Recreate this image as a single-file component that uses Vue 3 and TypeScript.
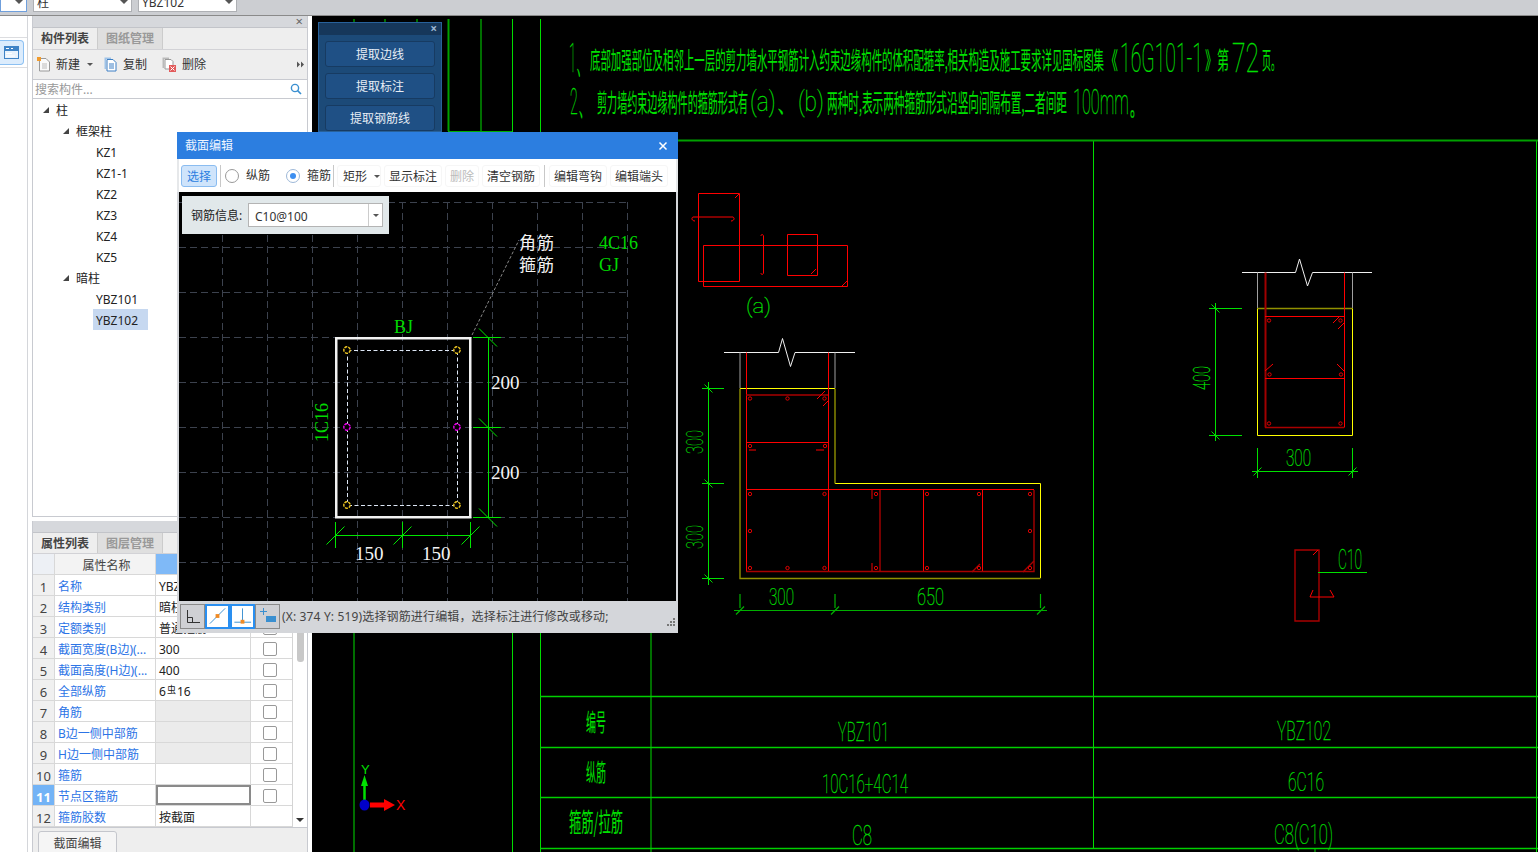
<script setup lang="ts">
import { onMounted, ref } from 'vue'

interface TreeNode {
  label: string
  level: number
  open?: boolean
  selected?: boolean
}
interface PropRow {
  no: number
  name: string
  value?: string
  rebar?: boolean
  gray?: boolean
  active?: boolean
  noCheck?: boolean
}
interface CadText {
  t: string
  x: number
  y: number
  w: number
  s: number
  c: string
  r?: boolean
}
interface Stroke {
  d: string
  c: string
}

const tree: TreeNode[] = [
  { label: '柱', level: 0, open: true },
  { label: '框架柱', level: 1, open: true },
  { label: 'KZ1', level: 2 },
  { label: 'KZ1-1', level: 2 },
  { label: 'KZ2', level: 2 },
  { label: 'KZ3', level: 2 },
  { label: 'KZ4', level: 2 },
  { label: 'KZ5', level: 2 },
  { label: '暗柱', level: 1, open: true },
  { label: 'YBZ101', level: 2 },
  { label: 'YBZ102', level: 2, selected: true },
]

const props: PropRow[] = [
  { no: 1, name: '名称', value: 'YBZ102' },
  { no: 2, name: '结构类别', value: '暗柱' },
  { no: 3, name: '定额类别', value: '普通箍筋' },
  { no: 4, name: '截面宽度(B边)(...', value: '300' },
  { no: 5, name: '截面高度(H边)(...', value: '400' },
  { no: 6, name: '全部纵筋', value: '16', rebar: true },
  { no: 7, name: '角筋', gray: true },
  { no: 8, name: 'B边一侧中部筋', gray: true },
  { no: 9, name: 'H边一侧中部筋', gray: true },
  { no: 10, name: '箍筋' },
  { no: 11, name: '节点区箍筋', active: true },
  { no: 12, name: '箍筋胶数', value: '按截面', noCheck: true },
]

const selected = ref('stirrup')

// slanted tick on a dimension line
const tick = (x: number, y: number, r: number, back = false): string =>
  back ? `M${x - r} ${y - r}L${x + r} ${y + r}` : `M${x - r} ${y + r}L${x + r} ${y - r}`

const strokes: Stroke[] = [
  // frame lines
  { d: 'M448.5 19V131', c: 'frame' },
  { d: 'M481 19V131M512.5 19V852M354 19V23M385 19V23M417 19V23M354 632V852M651 140V852M1093.5 140V848M1315 848V852M1536.5 140V852', c: 'bright' },
  { d: 'M540.5 19V852', c: 'bright' },
  { d: 'M448 131.5H512', c: 'mid' },
  { d: 'M540 140.5H1538', c: 'frame' },
  { d: 'M540 696.5H1538M540 747.5H1538M540 797.5H1538M540 848.5H1538', c: 'table' },

  // detail (a)
  { d: 'M698.5 193.5H739.5V281.5H698.5Z', c: 'red' },
  { d: 'M703.5 245.5H847.5V286.5H703.5Z', c: 'red' },
  { d: 'M787.5 234.5H817.5V275.5H787.5Z', c: 'red' },
  { d: 'M693 217H733M693 217C691 218 692 221 695 221M733 217C735 218 734 221 731 221', c: 'red' },
  { d: 'M763.5 236V273M763.5 236C763 234 761 234 761 236M763.5 273C763 275 761 275 761 273', c: 'red' },
  { d: 'M735 198L739 194M811 274L816 269M842 286L847 281', c: 'red' },

  // YBZ101
  { d: 'M724 352.5H778.5L782.5 338.5L790.5 366.5L795 352.5H855', c: 'white' },
  { d: 'M740 352.5V388M835 352.5V388', c: 'gray' },
  { d: 'M740 388.5H835M835 483.5H1040.5V578', c: 'yellow' },
  { d: 'M740 388.5V578.5H1040.5M835 388.5V483.5', c: 'olive' },
  { d: 'M746.5 352.5V572M828.5 352.5V572M746 442.5H828M746 489.5H1034M923.5 490V572M982.5 490V572', c: 'red' },
  { d: 'M746 395H828M746 571.5H1034V490M880 490V572', c: 'dred' },
  { d: 'M817 399L825 391M823 406L829 400M749 450H756M816 450H824', c: 'red' },
  { d: 'M872 499V490M872 572V563M972 572L980 564M1023 572L1034 561', c: 'dred' },
  { d: tick(708.5, 388.5, 4, true) + tick(708.5, 483.5, 4, true) + tick(708.5, 578.5, 4, true) + 'M702 388.5H724M702 483.5H724M702 578.5H724M708.5 382V585', c: 'dim' },
  { d: 'M734 610.5H1047M740 594V608M835 594V608M1040.5 594V608' + tick(740, 610.5, 4) + tick(835, 610.5, 4) + tick(1041, 610.5, 4), c: 'ddim' },

  // YBZ102
  { d: 'M1242 272.5H1295.5L1299.5 259L1307.5 286L1312.5 272.5H1372', c: 'white' },
  { d: 'M1257.5 272.5V308M1352.5 272.5V308', c: 'gray' },
  { d: 'M1257.5 308.5H1352.5', c: 'olive' },
  { d: 'M1257.5 308.5V435.5H1352.5V308.5', c: 'yellow' },
  { d: 'M1265.5 272.5V427.5', c: 'dredw' },
  { d: 'M1344.5 272.5V427.5M1265 316.5H1344M1265 378.5H1344', c: 'red' },
  { d: 'M1265 427.5H1344', c: 'dred' },
  { d: 'M1333 323L1339 317M1338 329L1344 323M1265 371L1273 364M1344 371L1337 364', c: 'red' },
  { d: tick(1215.5, 308.5, 4, true) + tick(1215.5, 435.5, 4, true) + 'M1209 308.5H1242M1209 435.5H1242M1215.5 303V441', c: 'dim' },
  { d: 'M1252 471.5H1358M1257.5 448V478M1352.5 448V478' + tick(1257.5, 471.5, 4) + tick(1352.5, 471.5, 4), c: 'dim' },

  // C10 tie
  { d: 'M1295 550H1319V621H1295Z', c: 'dred' },
  { d: 'M1313 555L1318 550M1310 597H1334M1310 597L1313 590M1334 597L1330 590', c: 'red' },
  { d: 'M1318 572.5H1367', c: 'dim' },

  // axis
  { d: 'M364.5 783V802', c: 'axisg' },
]

const smallBars: number[][] = [
  [750, 398.5], [787.5, 398.5], [824.5, 398.5],
  [750, 446], [825, 446],
  [750, 494], [824.5, 494], [876, 494], [927, 494], [979, 494], [1030, 494],
  [750, 531], [1030, 531],
  [750, 568], [787.5, 568], [824.5, 568], [876, 568], [927, 568], [979, 568], [1030, 568],
  [1269, 320.5], [1340.5, 320.5], [1269.5, 374.5], [1341, 374.5], [1269, 423.5], [1340.5, 423.5],
]

const cadTexts: CadText[] = [
  { t: '1、', x: 569, y: 72, w: 20, s: 40, c: 'num' },
  { t: '底部加强部位及相邻上一层的剪力墙水平钢筋计入约束边缘构件的体积配箍率,相关构造及施工要求详见国标图集', x: 590, y: 69, w: 514, s: 24, c: 'cjk' },
  { t: '《', x: 1105, y: 69, w: 13, s: 24, c: 'cjk' },
  { t: '16G101-1', x: 1120, y: 72, w: 83, s: 40, c: 'num' },
  { t: '》第', x: 1205, y: 69, w: 24, s: 24, c: 'cjk' },
  { t: '72', x: 1232, y: 72, w: 27, s: 40, c: 'num' },
  { t: '页。', x: 1262, y: 69, w: 18, s: 24, c: 'cjk' },
  { t: '2、', x: 570, y: 114, w: 22, s: 36, c: 'num' },
  { t: '剪力墙约束边缘构件的箍筋形式有', x: 597, y: 112, w: 151, s: 25, c: 'cjk' },
  { t: '(a)、(b)', x: 750, y: 111, w: 74, s: 28, c: 'num' },
  { t: '两种时,表示两种箍筋形式沿竖向间隔布置,二者间距', x: 827, y: 112, w: 240, s: 25, c: 'cjk' },
  { t: '100mm。', x: 1073, y: 114, w: 72, s: 36, c: 'num' },

  { t: '(a)', x: 746, y: 313, w: 25, s: 20, c: 'num' },
  { t: '300', x: 703, y: 454, w: 24, s: 23, c: 'dnum', r: true },
  { t: '300', x: 703, y: 549, w: 24, s: 23, c: 'dnum', r: true },
  { t: '300', x: 769, y: 605, w: 25, s: 23, c: 'num' },
  { t: '650', x: 917, y: 605, w: 27, s: 23, c: 'num' },
  { t: '400', x: 1210, y: 390, w: 24, s: 23, c: 'num', r: true },
  { t: '300', x: 1286, y: 466, w: 25, s: 23, c: 'num' },
  { t: 'C10', x: 1338, y: 569, w: 24, s: 27, c: 'num' },

  { t: '编号', x: 586, y: 731, w: 20, s: 24, c: 'cjk' },
  { t: '纵筋', x: 586, y: 781, w: 20, s: 24, c: 'cjk' },
  { t: '箍筋/拉筋', x: 569, y: 832, w: 54, s: 26, c: 'cjk' },
  { t: 'YBZ101', x: 838, y: 741, w: 51, s: 26, c: 'num' },
  { t: 'YBZ102', x: 1277, y: 740, w: 54, s: 26, c: 'num' },
  { t: '10C16+4C14', x: 822, y: 793, w: 86, s: 26, c: 'num' },
  { t: '6C16', x: 1288, y: 791, w: 36, s: 26, c: 'num' },
  { t: 'C8', x: 852, y: 845, w: 20, s: 27, c: 'num' },
  { t: 'C8(C10)', x: 1274, y: 844, w: 59, s: 27, c: 'num' },
]

// the drawing's text is squeezed to the width it has on the sheet
const textEls = ref<SVGTextElement[]>([])
const squeeze = ref<number[]>(cadTexts.map((t) => t.w / (t.t.length * t.s * 0.6)))

onMounted(() => {
  squeeze.value = cadTexts.map((t, i) => t.w / textEls.value[i].getComputedTextLength())
})

const textTransform = (t: CadText, i: number): string =>
  `translate(${t.x} ${t.y})${t.r ? ' rotate(-90)' : ''} scale(${squeeze.value[i]} 1)`

const gridX = [222.5, 267.5, 312.5, 357.5, 402.5, 447.5, 492.5, 537.5, 582.5, 627.5]
const gridY = [202.5, 247.5, 292.5, 337.5, 382.5, 427.5, 472.5, 517.5, 562.5]

const cornerBars: number[][] = [[347, 350], [457, 350], [347, 505], [457, 505]]
const sideBars: number[][] = [[347, 427], [457, 427]]

const dimPath =
  'M488.5 337V518M473 337.5H501M473 427.5H501M473 517.5H501' +
  tick(488, 337.5, 9, true) + tick(488, 427.5, 9, true) + tick(488, 517.5, 9, true) +
  'M335 535.5H471M335.5 522V548M402.5 522V548M470.5 522V548' +
  tick(335.5, 535.5, 9) + tick(402.5, 535.5, 9) + tick(470.5, 535.5, 9)
</script>

<template>
  <div class="app">
    <div class="topbar">
      <div class="combo first"><i class="caret"></i></div>
      <div class="combo"><span>柱</span><i class="caret"></i></div>
      <div class="combo"><span>YBZ102</span><i class="caret"></i></div>
    </div>

    <div class="main">
      <div class="strip">
        <div class="strip-row">
          <div class="strip-icon">
            <svg width="15" height="13" viewBox="0 0 15 13">
              <rect x="0.5" y="0.5" width="14" height="12" fill="#e8f2fc" stroke="#3f83c6" />
              <path d="M0 0H15V5H0Z" fill="#3f83c6" />
              <path d="M2 2.5H5M7 2.5H9M2 7.5H8M2 10H11" stroke="#fff" />
            </svg>
          </div>
        </div>
      </div>

      <div class="side">
        <section class="panel list-panel">
          <div class="grip"><span class="grip-x">×</span></div>
          <div class="tabs">
            <div class="tab on">构件列表</div>
            <div class="tab">图纸管理</div>
          </div>
          <div class="tools">
            <svg class="tool-icon" width="14" height="15" viewBox="0 0 14 15">
              <path d="M2.5 1.5H9L12.5 5V14H2.5Z" fill="#fafafa" stroke="#999" />
              <path d="M5 7H10M5 9H10M5 11H10" stroke="#bbb" />
              <rect x="0" y="0" width="4" height="4" fill="#f09a2c" />
            </svg>
            <span class="tool-text">新建</span>
            <i class="mini-caret"></i>
            <svg class="tool-icon copy" width="13" height="15" viewBox="0 0 13 15">
              <path d="M0.5 0.5H7V2H2V12H0.5Z" fill="#9fc3e8" />
              <path d="M3 2.5H9L12 5.5V14H3Z" fill="#fff" stroke="#3c7fc4" />
              <path d="M5 7H10M5 9H10M5 11H10" stroke="#3c7fc4" />
            </svg>
            <span class="tool-text wide">复制</span>
            <svg class="tool-icon del" width="15" height="15" viewBox="0 0 15 15">
              <path d="M0.5 0.5H7V2H2V11H0.5Z" fill="#bbb" />
              <path d="M3 2.5H9L11 4.5V12H3Z" fill="#fff" stroke="#999" />
              <rect x="7" y="8" width="7" height="7" fill="#e25b5b" />
              <path d="M8.5 9.5L12.5 13.5M12.5 9.5L8.5 13.5" stroke="#fff" />
            </svg>
            <span class="tool-text">删除</span>
            <svg class="more" width="7" height="7" viewBox="0 0 7 7">
              <path d="M0 0.5L3 3.5L0 6.5ZM4 0.5L7 3.5L4 6.5Z" fill="#555" />
            </svg>
          </div>
          <div class="search">
            <span class="search-hint">搜索构件...</span>
            <svg width="12" height="12" viewBox="0 0 12 12">
              <circle cx="5" cy="5" r="3.6" fill="none" stroke="#3a8fd0" stroke-width="1.4" />
              <path d="M7.6 7.6L11 11" stroke="#3a8fd0" stroke-width="1.6" />
            </svg>
          </div>
          <div class="tree">
            <div v-for="node in tree" :key="node.label" class="node" :class="'lvl' + node.level">
              <i v-if="node.open" class="arrow"></i>
              <span class="node-label" :class="{ sel: node.selected }">{{ node.label }}</span>
            </div>
          </div>
        </section>

        <section class="panel prop-panel">
          <div class="grip"></div>
          <div class="tabs">
            <div class="tab on">属性列表</div>
            <div class="tab">图层管理</div>
          </div>
          <div class="prop-body">
            <div class="prop-table">
              <div class="row head">
                <div class="c-no"></div>
                <div class="c-name">属性名称</div>
                <div class="c-val"></div>
                <div class="c-chk"></div>
              </div>
              <div v-for="p in props" :key="p.no" class="row">
                <div class="c-no" :class="{ active: p.active }">{{ p.no }}</div>
                <div class="c-name link">{{ p.name }}</div>
                <div class="c-val" :class="{ gray: p.gray, editing: p.active }">
                  <template v-if="p.rebar">6<span class="rebar">虫</span></template>{{ p.value }}
                </div>
                <div class="c-chk"><i v-if="!p.noCheck" class="check"></i></div>
              </div>
            </div>
            <div class="scroll">
              <div class="thumb"></div>
              <i class="scroll-down"></i>
            </div>
          </div>
          <div class="foot">
            <div class="foot-tab">截面编辑</div>
          </div>
        </section>
      </div>

      <div class="canvas">
        <svg class="cad" viewBox="312 16 1226 836" width="1226" height="836">
          <path v-for="(s, i) in strokes" :key="i" :d="s.d" :class="s.c" fill="none" />
          <circle v-for="(b, i) in smallBars" :key="'b' + i" :cx="b[0]" :cy="b[1]" r="1.7" class="bar" />
          <text
            v-for="(t, i) in cadTexts"
            :key="'t' + i"
            ref="textEls"
            :class="t.c"
            :font-size="t.s"
            :transform="textTransform(t, i)"
          >{{ t.t }}</text>

          <path d="M364.5 775L361 786H368Z" fill="#00e000" />
          <path d="M370 802.5H384V799L395 805L384 811V807.5H370Z" fill="#f00" />
          <ellipse cx="364.5" cy="805" rx="5" ry="5.5" fill="#0000c8" />
          <text x="361" y="774" class="axis-y">Y</text>
          <text x="396" y="810" class="axis-x">X</text>
        </svg>

        <div class="extract">
          <div class="extract-head"><span>×</span></div>
          <button class="extract-btn">提取边线</button>
          <button class="extract-btn">提取标注</button>
          <button class="extract-btn">提取钢筋线</button>
        </div>
      </div>
    </div>

    <div class="dialog">
      <div class="dlg-title">
        <span>截面编辑</span>
        <svg width="10" height="10" viewBox="0 0 10 10">
          <path d="M1.5 1.5L8.5 8.5M8.5 1.5L1.5 8.5" stroke="#fff" stroke-width="1.5" />
        </svg>
      </div>

      <div class="dlg-tools">
        <button class="pick">选择</button>
        <i class="sep s1"></i>
        <label class="radio r1" @click="selected = 'long'">
          <i class="dot" :class="{ on: selected === 'long' }"></i>纵筋
        </label>
        <label class="radio r2" @click="selected = 'stirrup'">
          <i class="dot" :class="{ on: selected === 'stirrup' }"></i>箍筋
        </label>
        <i class="sep s2"></i>
        <span class="tbtn shape">矩形<i class="mini-caret"></i></span>
        <span class="tbtn">显示标注</span>
        <span class="tbtn off">删除</span>
        <span class="tbtn">清空钢筋</span>
        <i class="sep s3"></i>
        <span class="tbtn">编辑弯钩</span>
        <span class="tbtn">编辑端头</span>
      </div>

      <div class="dlg-canvas">
        <svg class="sect" viewBox="179 192 497 409" width="497" height="409">
          <path v-for="x in gridX" :key="'x' + x" :d="`M${x} 202V601`" class="grid" />
          <path v-for="y in gridY" :key="'y' + y" :d="`M179 ${y}H628`" class="grid" />
          <path d="M472 335L519 240" class="leader" />
          <rect x="336.25" y="338.25" width="134" height="179" class="outline" />
          <rect x="347.5" y="350.5" width="110" height="155" class="hoop" />
          <path :d="dimPath" class="sect-dim" />
          <circle v-for="b in cornerBars" :key="'c' + b[0] + b[1]" :cx="b[0]" :cy="b[1]" r="3.2" class="corner" />
          <circle v-for="b in sideBars" :key="'s' + b[0] + b[1]" :cx="b[0]" :cy="b[1]" r="3.2" class="side-bar" />
          <text x="394" y="333" class="lab-g">BJ</text>
          <text x="599" y="249" class="lab-g">4C16</text>
          <text x="599" y="271" class="lab-g">GJ</text>
          <text x="328" y="442" class="lab-g" transform="rotate(-90 328 442)">1C16</text>
          <text x="519" y="249" class="lab-cn">角筋</text>
          <text x="519" y="271" class="lab-cn">箍筋</text>
          <text x="491" y="389" class="lab-w">200</text>
          <text x="491" y="479" class="lab-w">200</text>
          <text x="355" y="560" class="lab-w">150</text>
          <text x="422" y="560" class="lab-w">150</text>
        </svg>

        <div class="info">
          <span class="info-label">钢筋信息:</span>
          <div class="info-input">
            <span class="info-val">C10@100</span>
            <span class="info-drop"><i class="mini-caret"></i></span>
          </div>
        </div>
      </div>

      <div class="dlg-status">
        <div class="snap">
          <svg width="22" height="22" viewBox="0 0 22 22">
            <path d="M5.5 5V17.5H18M5.5 12.5H10.5V17.5" fill="none" stroke="#333" />
          </svg>
        </div>
        <div class="snap on">
          <svg width="22" height="22" viewBox="0 0 22 22">
            <path d="M3 19L19 3" stroke="#3a8fd0" />
            <rect x="9" y="9" width="4" height="4" fill="#f08a24" />
          </svg>
        </div>
        <div class="snap on">
          <svg width="22" height="22" viewBox="0 0 22 22">
            <path d="M2.5 17.5H20M11 3V17" stroke="#3a8fd0" />
            <rect x="9" y="15" width="4" height="4" fill="#f08a24" />
          </svg>
        </div>
        <div class="snap">
          <svg width="22" height="22" viewBox="0 0 22 22">
            <path d="M3 6.5H10M6.5 3V10" stroke="#3a8fd0" />
            <rect x="9" y="11" width="10" height="6" fill="#3a8fd0" />
          </svg>
        </div>
        <span class="status-text">(X: 374 Y: 519)选择钢筋进行编辑，选择标注进行修改或移动;</span>
        <svg class="resize" width="10" height="10" viewBox="0 0 10 10">
          <path d="M7 1h2v2H7zM4 4h2v2H4zM7 4h2v2H7zM1 7h2v2H1zM4 7h2v2H4zM7 7h2v2H7z" fill="#777" />
        </svg>
      </div>
    </div>
  </div>
</template>

<style>
html,
body {
  margin: 0;
  overflow: hidden;
  background: #fff;
}
</style>

<style scoped>
.app {
  position: relative;
  width: 1538px;
  height: 852px;
  overflow: hidden;
  display: flex;
  flex-direction: column;
  background: #fff;
  color: #222;
  font: 12px/16px "Noto Sans", "Noto Sans CJK SC", sans-serif;
}

i {
  display: block;
  font-style: normal;
}

.topbar {
  flex: none;
  height: 15px;
  display: flex;
  gap: 6px;
  background: #ccced2;
  border-bottom: 1px solid #8a8a8a;
}

.combo {
  position: relative;
  box-sizing: border-box;
  width: 99px;
  height: 12px;
  padding-left: 3px;
  background: #fff;
  border: 1px solid #aeb0b4;
  border-top: 0;
  line-height: 6px;
  color: #333;
}

.combo.first {
  width: 27px;
  border-color: #6f9fdc;
}

.caret {
  position: absolute;
  right: 3px;
  top: 0;
  border: 4px solid transparent;
  border-top: 4px solid #555;
}

.main {
  flex: 1;
  display: flex;
  min-height: 0;
}

.strip {
  flex: none;
  box-sizing: border-box;
  width: 28px;
  margin-right: 4px;
  border-right: 1px solid #d4d6da;
  padding-top: 21px;
}

.strip-row {
  padding: 2px 0;
  border: 1px solid #dcdde0;
  border-width: 1px 0;
}

.strip-icon {
  width: 23px;
  height: 23px;
  display: flex;
  align-items: center;
  justify-content: center;
  background: #dcecfc;
  border: 1px solid #8cc0f2;
  border-left: 0;
  border-radius: 0 4px 4px 0;
}

.side {
  flex: none;
  width: 276px;
  margin-right: 4px;
  display: flex;
  flex-direction: column;
  gap: 4px;
}

.panel {
  box-sizing: border-box;
  display: flex;
  flex-direction: column;
  border: 1px solid #c8cad0;
  border-top: 0;
}

.list-panel {
  flex: none;
  height: 501px;
}

.prop-panel {
  flex: 1;
  min-height: 0;
  border-bottom: 0;
}

.grip {
  flex: none;
  position: relative;
  height: 11px;
  background: #d6d8dc;
  border-bottom: 1px solid #c2c4c9;
}

.grip-x {
  position: absolute;
  right: 4px;
  top: -3px;
  font-size: 13px;
  color: #666;
}

.tabs {
  flex: none;
  box-sizing: border-box;
  height: 22px;
  display: flex;
  background: #eee;
  border-bottom: 1px solid #d2d2d6;
}

.prop-panel .tabs {
  height: 21px;
}

.tab {
  box-sizing: border-box;
  width: 65px;
  line-height: 21px;
  text-align: center;
  background: #dfdfdf;
  color: #999;
  font-weight: 700;
  border-right: 1px solid #ccc;
}

.tab.on {
  background: #eee;
  color: #444;
}

.tools {
  flex: none;
  height: 29px;
  display: flex;
  align-items: center;
  padding-left: 4px;
  background: #eee;
  border-bottom: 1px solid #c8cad0;
}

.tool-text {
  margin-left: 5px;
  color: #333;
}

.tool-text.wide {
  margin-left: 6px;
}

.mini-caret {
  border: 3px solid transparent;
  border-top: 3px solid #555;
  margin-top: 3px;
}

.tools .mini-caret {
  margin-left: 7px;
}

.copy {
  margin-left: 11px;
}

.del {
  margin-left: 15px;
}

.more {
  margin-left: auto;
  margin-right: 3px;
}

.search {
  flex: none;
  box-sizing: border-box;
  height: 19px;
  display: flex;
  align-items: center;
  justify-content: space-between;
  padding: 0 5px 0 2px;
  background: #fff;
  border-bottom: 1px solid #c8cad0;
}

.search-hint {
  padding-top: 2px;
  color: #999;
}

.tree {
  flex: 1;
  background: #fff;
}

.node {
  position: relative;
  height: 21px;
  display: flex;
  align-items: center;
  color: #222;
}

.lvl0 {
  padding-left: 20px;
}

.lvl1 {
  padding-left: 40px;
}

.lvl2 {
  padding-left: 60px;
}

.arrow {
  position: absolute;
  margin-left: -10px;
  width: 0;
  height: 0;
  border-left: 6px solid transparent;
  border-bottom: 6px solid #444;
}

.node-label {
  height: 21px;
  padding: 0 3px;
  line-height: 23px;
}

.node-label.sel {
  background: #c6d8f0;
  padding-right: 10px;
}

.prop-body {
  flex: none;
  height: 273px;
  display: flex;
  background: #fff;
}

.prop-table {
  width: 259px;
  border-right: 1px solid #d4d4d4;
}

.row {
  display: grid;
  grid-template-columns: 22px 101px 95px 41px;
  height: 21px;
  box-sizing: border-box;
  border-bottom: 1px solid #d8d8d8;
}

.row > div {
  box-sizing: border-box;
  padding-top: 2px;
  line-height: 20px;
  border-right: 1px solid #d8d8d8;
  white-space: nowrap;
  overflow: hidden;
}

.c-no {
  background: #f0f0f0;
  text-align: center;
  color: #444;
  font-size: 13px;
}

.c-no.active {
  background: #73b3f6;
  color: #fff;
  font-weight: 700;
}

.c-name {
  padding-left: 3px;
}

.link {
  color: #2c74e6;
}

.c-val {
  padding-left: 3px;
  color: #222;
}

.c-val.gray {
  background: #ebebeb;
}

.row > .c-val.editing {
  padding-top: 0;
  border: 2px solid #8a8a8a;
}

.rebar {
  display: inline-block;
  font-size: 9px;
  line-height: 10px;
  vertical-align: 3px;
  margin: 0 1px;
}

.c-chk {
  display: flex;
  align-items: center;
  justify-content: center;
  padding-right: 4px;
}

.row > .c-chk {
  border-right: 0;
}

.check {
  box-sizing: border-box;
  width: 14px;
  height: 14px;
  border: 1px solid #999;
  border-radius: 2px;
  background: #fff;
}

.head .c-no {
  background: #edf0f5;
}

.head .c-name {
  background: #f3f3f3;
  text-align: center;
  color: #444;
}

.head .c-val {
  background: #7fb9f7;
}

.head .c-chk {
  background: #f3f3f3;
}

.scroll {
  flex: 1;
  display: flex;
  flex-direction: column;
  align-items: center;
  background: #fff;
}

.thumb {
  width: 7px;
  height: 62px;
  margin-top: 46px;
  border-radius: 3px;
  background: #c8c8c8;
}

.scroll-down {
  margin-top: auto;
  margin-bottom: 1px;
  border: 4px solid transparent;
  border-top: 4px solid #333;
}

.foot {
  flex: 1;
  min-height: 0;
  overflow: hidden;
  padding: 3px 0 0 5px;
  background: #eee;
  border-top: 1px solid #c8cad0;
}

.foot-tab {
  box-sizing: border-box;
  width: 79px;
  height: 24px;
  line-height: 23px;
  text-align: center;
  background: #f5f5f5;
  border: 1px solid #c4c6cc;
  border-radius: 3px 3px 0 0;
  color: #444;
}

.canvas {
  position: relative;
  flex: 1;
  background: #000;
}

.cad {
  display: block;
}

.frame {
  stroke: #00a000;
  stroke-width: 2;
}

.bright {
  stroke: #00dc00;
  stroke-width: 1;
}

.mid {
  stroke: #00b000;
  stroke-width: 1;
}

.table {
  stroke: #00d000;
  stroke-width: 1.6;
}

.red {
  stroke: #f00;
}

.dred {
  stroke: #a80000;
  stroke-width: 1.4;
}

.dredw {
  stroke: #a00000;
  stroke-width: 2;
}

.white {
  stroke: #f0f0f0;
}

.gray {
  stroke: #a0a0a0;
}

.yellow {
  stroke: #ff0;
}

.olive {
  stroke: #909000;
  stroke-width: 1.4;
}

.dim {
  stroke: #00e000;
}

.ddim {
  stroke: #00b000;
  stroke-width: 1.2;
}

.axisg {
  stroke: #00e000;
  stroke-width: 2.5;
}

.bar {
  fill: none;
  stroke: #e00000;
}

.cjk {
  fill: #00e000;
  font-family: "Noto Sans CJK SC", sans-serif;
  font-weight: 400;
}

.num {
  fill: #00e000;
  stroke: #00e000;
  stroke-width: 0.25;
  font-family: Roboto, "Liberation Sans", sans-serif;
  font-weight: 100;
}

.dnum {
  fill: #00c000;
  stroke: #00c000;
  stroke-width: 0.25;
  font-family: Roboto, "Liberation Sans", sans-serif;
  font-weight: 100;
}

.axis-y {
  fill: #00e000;
  font: 13px "Liberation Sans", sans-serif;
}

.axis-x {
  fill: #f00;
  font: 14px "Liberation Sans", sans-serif;
}

.extract {
  position: absolute;
  left: 6px;
  top: 6px;
  box-sizing: border-box;
  width: 124px;
  height: 110px;
  background: #1c4a78;
  border: 1px solid #28619a;
}

.extract-head {
  height: 12px;
  background: #16375a;
  text-align: right;
  padding-right: 4px;
  line-height: 12px;
  font-size: 12px;
  font-weight: 700;
  color: #9bb6d2;
}

.extract-btn {
  display: block;
  box-sizing: border-box;
  width: 110px;
  height: 26px;
  margin: 6px 0 0 6px;
  padding: 2px 0 0;
  background: #1f5085;
  border: 1px solid #173b62;
  border-radius: 3px;
  color: #e8eef5;
  font: inherit;
}

.dialog {
  position: absolute;
  left: 177px;
  top: 132px;
  width: 501px;
  height: 501px;
  display: flex;
  flex-direction: column;
  background: #d4d6da;
}

.dlg-title {
  flex: none;
  height: 27px;
  display: flex;
  align-items: center;
  justify-content: space-between;
  padding: 0 10px 0 8px;
  background: #2c7ee0;
  color: #eef5ff;
}

.dlg-tools {
  flex: none;
  height: 33px;
  display: flex;
  align-items: center;
  padding-left: 4px;
  background: #fff;
  color: #333;
  white-space: nowrap;
  border: 1px solid #e6e8ea;
  border-width: 0 2px 0 2px;
  box-sizing: border-box;
}

.dlg-tools > * {
  flex: none;
}

.pick {
  box-sizing: border-box;
  width: 36px;
  height: 22px;
  margin-left: -2px;
  padding: 2px 0 0;
  background: #cfe4fb;
  border: 1px solid #8abcf0;
  border-radius: 3px;
  color: #2c7ee0;
  font: inherit;
}

.sep {
  width: 1px;
  height: 22px;
  background: #c8c8c8;
}

.s1 {
  margin-left: 3px;
}

.s2 {
  margin-left: 2px;
}

.s3 {
  margin-left: 4px;
}

.radio {
  display: flex;
  align-items: center;
  gap: 7px;
}

.r1 {
  margin-left: 4px;
}

.r2 {
  margin-left: 16px;
}

.dot {
  position: relative;
  box-sizing: border-box;
  width: 14px;
  height: 14px;
  border: 1px solid #999;
  border-radius: 50%;
}

.dot.on {
  border-color: #9db8d8;
}

.dot.on::after {
  content: "";
  position: absolute;
  left: 3px;
  top: 3px;
  width: 6px;
  height: 6px;
  border-radius: 50%;
  background: #3c8ef0;
}

.tbtn {
  display: flex;
  align-items: center;
  box-sizing: border-box;
  height: 22px;
  padding: 2px 4px 0;
  margin-left: 3px;
  border: 1px solid #f6f6f6;
  border-radius: 3px;
}

.tbtn.off {
  color: #bbb;
}

.shape {
  padding: 2px 0 0 5px;
}

.shape .mini-caret {
  margin-left: 7px;
}

.s3 + .tbtn {
  margin-left: 4px;
}

.dlg-canvas {
  position: relative;
  flex: none;
  height: 409px;
  margin: 0 2px;
  background: #000;
}

.sect {
  display: block;
}

.grid {
  stroke: #3c424e;
  stroke-dasharray: 7 4;
  fill: none;
}

.leader {
  stroke: #888;
  stroke-dasharray: 3 2;
  fill: none;
}

.outline {
  fill: none;
  stroke: #f2f2f2;
  stroke-width: 2.5;
}

.hoop {
  fill: none;
  stroke: #dde6f5;
  stroke-dasharray: 4 2.5;
}

.sect-dim {
  fill: none;
  stroke: #00e600;
}

.corner {
  fill: #000;
  stroke: #f0c820;
  stroke-width: 1.4;
  stroke-dasharray: 3 1;
}

.side-bar {
  fill: #000;
  stroke: #f000f0;
  stroke-width: 1.4;
  stroke-dasharray: 3 1;
}

.lab-g {
  fill: #00d800;
  font: 18px "Liberation Serif", serif;
}

.lab-cn {
  fill: #f4f4f4;
  font: 17px "Noto Sans CJK SC", sans-serif;
  letter-spacing: 1px;
}

.lab-w {
  fill: #f4f4f4;
  font: 19px "Liberation Serif", serif;
}

.info {
  position: absolute;
  left: 3px;
  top: 4px;
  box-sizing: border-box;
  width: 207px;
  height: 38px;
  display: flex;
  align-items: center;
  padding-left: 9px;
  background: #e1e8ea;
}

.info-label {
  width: 57px;
  flex: none;
  padding-top: 1px;
  color: #222;
}

.info-input {
  box-sizing: border-box;
  width: 135px;
  height: 24px;
  display: flex;
  align-items: center;
  justify-content: space-between;
  background: #fff;
  border: 1px solid #b4b4b4;
}

.info-val {
  padding: 3px 0 0 6px;
  color: #333;
}

.info-drop {
  box-sizing: border-box;
  width: 14px;
  height: 22px;
  display: flex;
  align-items: center;
  justify-content: center;
  border-left: 1px solid #ccc;
}

.dlg-status {
  flex: 1;
  display: flex;
  align-items: center;
  padding: 0 2px 2px 3px;
  background: #d4d6da;
}

.snap {
  box-sizing: border-box;
  width: 25px;
  height: 25px;
  display: flex;
  align-items: center;
  justify-content: center;
  background: #cfd0d4;
  border: 1px solid #8a8a8a;
}

.snap.on {
  background: #fff;
  border: 2px solid #2a8ff0;
}

.status-text {
  margin: 2px 0 0 2px;
  color: #444;
  white-space: nowrap;
  letter-spacing: 0.15px;
}

.resize {
  margin-left: auto;
  margin-top: 12px;
}
</style>
